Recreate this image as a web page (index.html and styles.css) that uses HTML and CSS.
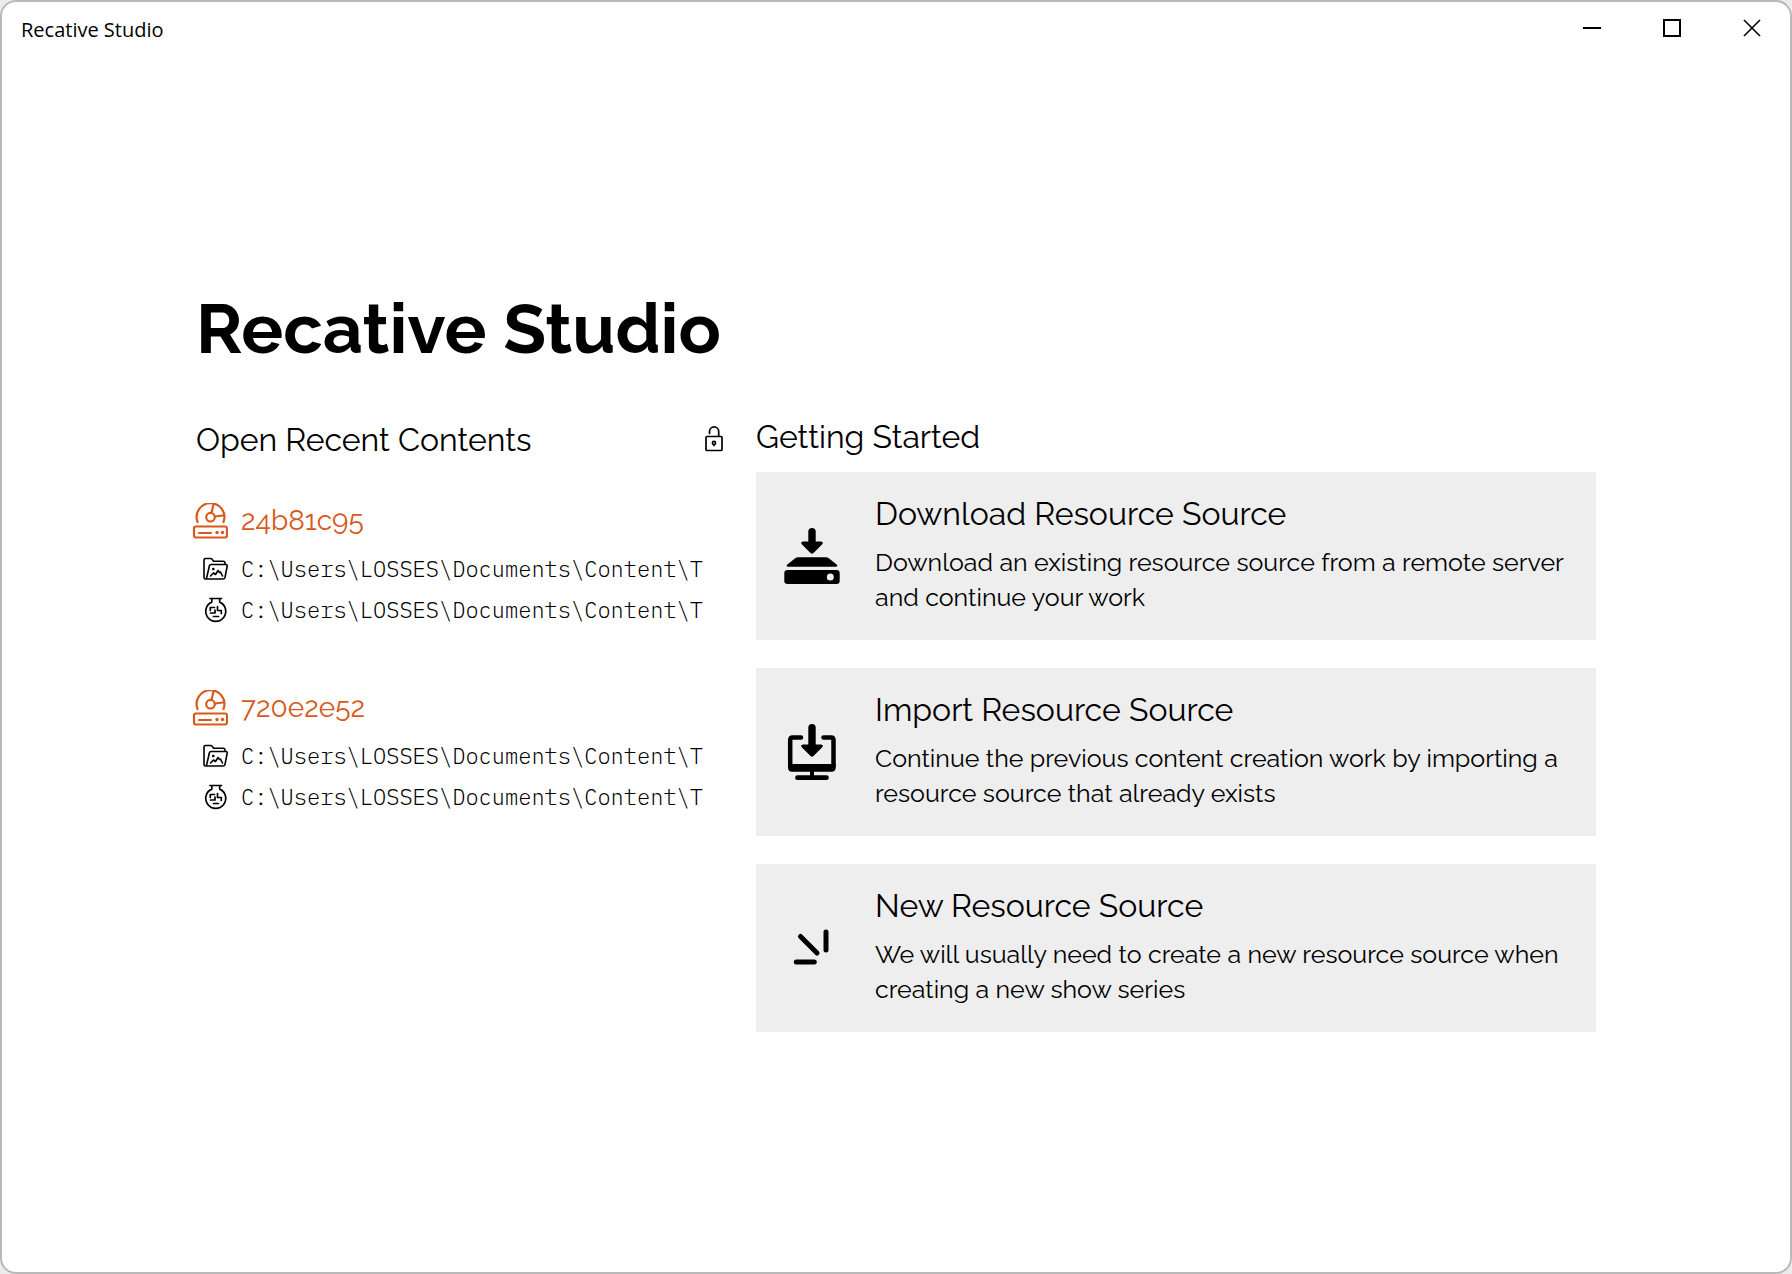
FILE: index.html
```html
<!DOCTYPE html>
<html lang="en">
<head>
<meta charset="utf-8">
<meta name="viewport" content="width=device-width, initial-scale=1">
<title>Recative Studio</title>
<link rel="stylesheet" href="styles.css">
</head>
<body>
<svg class="sprite" aria-hidden="true">
  <symbol id="disk" viewBox="0 0 36 36">
    <g fill="none" stroke="currentColor" stroke-width="2.200" stroke-linecap="round" stroke-linejoin="round">
      <rect x="2" y="23.500" width="33" height="11" rx="2"/>
      <path d="M7 30H19M5.500 19A13.900 13.900 0 1 1 31.500 19M19.500 10L21.500 1.500M23 13.500L31 12.500"/>
      <circle cx="18.500" cy="14.200" r="4.300"/>
    </g>
    <circle cx="25" cy="29.500" r="1.700" fill="currentColor"/><circle cx="30.500" cy="29.500" r="1.700" fill="currentColor"/>
  </symbol>
  <symbol id="folder" viewBox="0 0 28 28">
    <g fill="none" stroke="currentColor" stroke-width="1.600" stroke-linecap="round" stroke-linejoin="round">
      <path d="M24 9.500V8Q24 6.200 22 6.200H12.500L11 4.100Q10.500 3.500 9.500 3.500H4.500Q3 3.500 3 5V22.500Q3 24 4.500 24H22Q23.600 24 24 22.500L26.200 11Q26.400 9.500 25 9.500H10Q8.700 9.500 8.400 10.800L5.500 23.500M9.500 21L12.500 18L14.500 19.500L17 15.500L18.500 17.500L19.500 17L21.500 21"/>
    </g>
    <circle cx="12.300" cy="14" r="1.300" fill="currentColor"/>
  </symbol>
  <symbol id="flask" viewBox="0 0 28 28">
    <path fill="none" stroke="currentColor" stroke-width="1.700" stroke-linecap="round" stroke-linejoin="round" d="M9 2.500H20.500M10.800 2.500V6.100A10 10 0 1 0 18.700 6.100V2.500M9.300 14.500V11.500H13.500M9.500 17H14V14M16.500 10.500V14.500H20.300V17.500M12.500 20.500H17.500"/>
  </symbol>
  <symbol id="lock" viewBox="0 0 28 28">
    <g fill="none" stroke="currentColor" stroke-width="1.700" stroke-linecap="round" stroke-linejoin="round">
      <rect x="6" y="12.500" width="16" height="14" rx="1"/>
      <path d="M9.500 9.500V7.500A4.600 4.600 0 0 1 18.700 7.500V12M14 20.500V21.500"/>
      <circle cx="14" cy="19" r="1.600"/>
    </g>
  </symbol>
  <symbol id="download" viewBox="0 0 56 56">
    <path fill="currentColor" d="M24.300 3.700A3.700 3.700 0 0 1 31.700 3.700V13.500H37Q40 14 38 16.500L29.500 25Q28 26.500 26.500 25L18 16.500Q16 14 19 13.500H24.300ZM13.500 29.300H42.500L44.500 30L53 36.700Q54 38.600 52 38.700H4Q2 38.600 3 36.700L11.500 30Z"/>
    <path fill="currentColor" fill-rule="evenodd" d="M3.500 42H52.500Q55.700 42 55.700 45V53Q55.700 56 52.500 56H3.500Q.3 56 .3 53V45Q.3 42 3.500 42ZM46.300 45.500A3.500 3.500 0 1 0 46.300 52.500A3.500 3.500 0 1 0 46.300 45.500Z"/>
  </symbol>
  <symbol id="import" viewBox="0 0 56 56">
    <path fill="currentColor" d="M24.300 3.700A3.700 3.700 0 0 1 31.700 3.700V20.500H37Q40 21 38 23.500L29.500 32Q28 33.500 26.500 32L18 23.500Q16 21 19 20.500H24.300ZM4 40H51.700V43.500Q51.700 47.700 47.500 47.700H30V51.300H42.500A2.300 2.300 0 0 1 42.500 56H13.500A2.300 2.300 0 0 1 13.500 51.300H26V47.700H8.200Q4 47.700 4 43.500Z"/>
    <path fill="none" stroke="currentColor" stroke-width="4.500" stroke-linecap="round" d="M17 13.500H8.500Q6.200 13.500 6.200 16V42M39.500 13.500H47.200Q49.500 13.500 49.500 16V42"/>
  </symbol>
  <symbol id="sparkle" viewBox="0 0 56 56">
    <path fill="none" stroke="currentColor" stroke-width="5" stroke-linecap="round" d="M42 12V30M16.500 16.500L33 33M12.300 42H30.300"/>
  </symbol>
</svg>
<div class="window">
  <header class="titlebar">
    <span class="titlebar-name">Recative Studio</span>
    <div class="controls">
      <button type="button" aria-label="Minimize"><svg viewBox="0 0 18 18"><path d="M0 9H18"/></svg></button>
      <button type="button" aria-label="Maximize"><svg viewBox="0 0 18 18"><path d="M1 1H17V17H1Z"/></svg></button>
      <button type="button" aria-label="Close"><svg viewBox="0 0 18 18"><path stroke-width="1.600" d="M1 1L17 17M17 1L1 17"/></svg></button>
    </div>
  </header>
  <main class="welcome">
    <h1>Recative Studio</h1>
    <div class="columns">
      <section class="recent">
        <div class="recent-head">
          <h2>Open Recent Contents</h2>
          <button type="button" class="lock" aria-label="Unlock"><svg><use href="#lock"/></svg></button>
        </div>
        <ul class="recent-list">
          <li>
            <a class="recent-name" href="#24b81c95"><svg><use href="#disk"/></svg>24b81c95</a>
            <div class="path"><svg><use href="#folder"/></svg><span>C:\Users\LOSSES\Documents\Content\T</span></div>
            <div class="path"><svg><use href="#flask"/></svg><span>C:\Users\LOSSES\Documents\Content\T</span></div>
          </li>
          <li>
            <a class="recent-name" href="#720e2e52"><svg><use href="#disk"/></svg>720e2e52</a>
            <div class="path"><svg><use href="#folder"/></svg><span>C:\Users\LOSSES\Documents\Content\T</span></div>
            <div class="path"><svg><use href="#flask"/></svg><span>C:\Users\LOSSES\Documents\Content\T</span></div>
          </li>
        </ul>
      </section>
      <section class="start">
        <h2>Getting Started</h2>
        <div class="cards">
          <button type="button" class="card">
            <svg><use href="#download"/></svg>
            <span class="card-text"><span class="card-title">Download Resource Source</span><span class="card-desc">Download an existing resource source from a remote server and continue your work</span></span>
          </button>
          <button type="button" class="card">
            <svg><use href="#import"/></svg>
            <span class="card-text"><span class="card-title">Import Resource Source</span><span class="card-desc">Continue the previous content creation work by importing a resource source that already exists</span></span>
          </button>
          <button type="button" class="card">
            <svg><use href="#sparkle"/></svg>
            <span class="card-text"><span class="card-title">New Resource Source</span><span class="card-desc">We will usually need to create a new resource source when creating a new show series</span></span>
          </button>
        </div>
      </section>
    </div>
  </main>
</div>
</body>
</html>
```
FILE: styles.css
```css
*, *::before, *::after { box-sizing: border-box; }

body {
  margin: 0;
  background: #ececec;
  color: #000;
  font-family: Raleway, Lato, sans-serif;
}

h1, h2, ul { margin: 0; padding: 0; }
ul { list-style: none; }
a { color: inherit; text-decoration: none; }
svg { display: block; flex: none; }

button {
  padding: 0;
  border: 0;
  background: none;
  color: inherit;
  font: inherit;
}

.sprite { position: absolute; width: 0; height: 0; }

.window {
  display: flex;
  flex-direction: column;
  min-height: 100vh;
  border: 2px solid #b9b9b9;
  border-radius: 16px;
  background: #fff;
}

.titlebar {
  display: flex;
  justify-content: space-between;
  height: 56px;
  padding-left: 19px;
}

.titlebar-name {
  font-family: "Segoe UI", "Open Sans", sans-serif;
  font-size: 20px;
  line-height: 56px;
}

.controls { display: flex; margin-right: -2px; }

.controls button {
  display: grid;
  place-items: center;
  width: 80px;
  height: 52px;
}

.controls svg {
  width: 18px;
  height: 18px;
  fill: none;
  stroke: #000;
  stroke-width: 2;
}

.welcome {
  flex: 1;
  display: flex;
  flex-direction: column;
  justify-content: center;
  width: 100%;
  max-width: 1400px;
  margin: 0 auto;
}

h1 {
  font-size: 70px;
  line-height: 60px;
  font-weight: 700;
}

h2 {
  font-size: 32px;
  line-height: 40px;
  font-weight: 400;
}

.columns {
  display: grid;
  grid-template-columns: 2fr 3fr;
  margin-top: 59px;
}

.recent { min-width: 0; padding-right: 28px; }

.recent-head {
  display: flex;
  justify-content: space-between;
  align-items: center;
  padding-top: 3px;
}

.lock { padding-bottom: 4px; }
.lock svg, .path svg { width: 28px; height: 28px; }

.recent-list {
  display: grid;
  gap: 57px;
  margin-top: 40px;
}

.recent-name {
  display: flex;
  align-items: center;
  gap: 13px;
  margin: 0 0 6px -4px;
  color: #d8591b;
  font-size: 28px;
  line-height: 42px;
  font-variant-numeric: oldstyle-nums;
}

.recent-name svg { width: 36px; height: 36px; }

.path {
  display: flex;
  align-items: center;
  gap: 12px;
  height: 41px;
  padding: 0 21px 0 5px;
  font-family: "IBM Plex Mono", "Liberation Mono", monospace;
  font-size: 22px;
  font-weight: 300;
}

.path span {
  overflow: hidden;
  white-space: nowrap;
}

.start h2 { margin-bottom: 15px; }

.cards { display: grid; gap: 28px; }

.card {
  display: flex;
  align-items: center;
  gap: 35px;
  padding: 22px 28px;
  background: #eee;
  text-align: left;
}

.card svg { width: 56px; height: 56px; }

.card-text {
  display: flex;
  flex-direction: column;
  gap: 11px;
  padding-bottom: 3px;
}

.card-title { font-size: 32px; line-height: 40px; }
.card-desc { font-size: 25px; line-height: 35px; }
```
